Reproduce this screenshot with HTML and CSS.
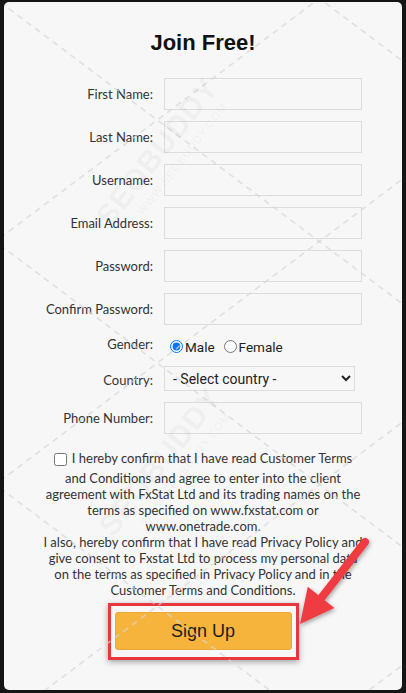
FILE: index.html
```html
<!DOCTYPE html>
<html lang="en">
<head>
<meta charset="utf-8">
<title>Join Free!</title>
<link rel="stylesheet" href="styles.css">
</head>
<body>
<div class="modal">
  <h1 class="title">Join Free!</h1>
  <form class="form">
    <div class="row"><label class="lbl">First Name:</label><input class="field" type="text"></div>
    <div class="row"><label class="lbl">Last Name:</label><input class="field" type="text"></div>
    <div class="row"><label class="lbl">Username:</label><input class="field" type="text"></div>
    <div class="row"><label class="lbl">Email Address:</label><input class="field" type="text"></div>
    <div class="row"><label class="lbl">Password:</label><input class="field" type="password"></div>
    <div class="row"><label class="lbl">Confirm Password:</label><input class="field" type="password"></div>
    <div class="row row-gender"><label class="lbl lbl-gender">Gender:</label>
      <div class="radios">
        <label class="radio"><input type="radio" name="g" checked>Male</label>
        <label class="radio"><input type="radio" name="g">Female</label>
      </div>
    </div>
    <div class="row row-country"><label class="lbl lbl-country">Country:</label>
      <select class="select"><option>- Select country -</option></select>
    </div>
    <div class="row"><label class="lbl">Phone Number:</label><input class="field" type="text"></div>
    <p class="terms"><input class="check" type="checkbox">I hereby confirm that I have read Customer Terms<br>and Conditions and agree to enter into the client<br>agreement with FxStat Ltd and its trading names on the<br>terms as specified on www.fxstat.com or<br>www.onetrade.com.<br>I also, hereby confirm that I have read Privacy Policy and<br>give consent to Fxstat Ltd to process my personal data<br>on the terms as specified in Privacy Policy and in the<br>Customer Terms and Conditions.</p>
    <div class="cta">
      <div class="highlight"><button class="btn" type="button">Sign Up</button></div>
    </div>
  </form>
</div>
<svg class="overlay" width="406" height="693" viewBox="0 0 406 693">
  <defs>
    <clipPath id="panel"><rect x="4" y="2" width="398" height="688" rx="5"/></clipPath>
    <filter id="sh" x="-30%" y="-30%" width="160%" height="160%">
      <feDropShadow dx="1" dy="2" stdDeviation="2" flood-color="#000" flood-opacity="0.35"/>
    </filter>
  </defs>
  <g clip-path="url(#panel)" class="wm">
    <g class="wm-lines">
      <line x1="0" y1="-484" x2="406" y2="-179.5"/>
      <line x1="0" y1="-241" x2="406" y2="63.5"/>
      <line x1="0" y1="2" x2="406" y2="306.5"/>
      <line x1="0" y1="245" x2="406" y2="549.5"/>
      <line x1="0" y1="488" x2="406" y2="792.5"/>
      <line x1="0" y1="731" x2="406" y2="1035.5"/>
      <line x1="0" y1="238" x2="406" y2="-66.5"/>
      <line x1="0" y1="481" x2="406" y2="176.5"/>
      <line x1="0" y1="724" x2="406" y2="419.5"/>
      <line x1="0" y1="967" x2="406" y2="662.5"/>
      <line x1="0" y1="1210" x2="406" y2="905.5"/>
    </g>
    <g transform="translate(165 158) rotate(-52)">
      <text class="wm-big" x="0" y="0" text-anchor="middle">SEOBUDDY</text>
      <text class="wm-small" x="10" y="18" text-anchor="middle">WWW.SEOBUDDY.COM</text>
    </g>
    <g transform="translate(168 468) rotate(-52)">
      <text class="wm-big" x="0" y="0" text-anchor="middle">SEOBUDDY</text>
      <text class="wm-small" x="10" y="18" text-anchor="middle">WWW.SEOBUDDY.COM</text>
    </g>
  </g>
  <g filter="url(#sh)" class="arrow">
    <line x1="365" y1="542" x2="322" y2="597" stroke-width="8" stroke-linecap="round"/>
    <polygon points="300,624 334.4,607.9 307.8,586.7"/>
  </g>
</svg>
</body>
</html>
```

FILE: styles.css
```css
* { box-sizing: border-box; }

html, body { margin: 0; padding: 0; }

body {
  width: 406px;
  height: 693px;
  background: #151515;
  position: relative;
  overflow: hidden;
  font-family: "Lato", "Liberation Sans", sans-serif;
}

.modal {
  margin: 2px 4px 0 4px;
  height: 688px;
  background: #f7f7f7;
  border-radius: 5px;
  padding-top: 28px;
}

.title {
  margin: 0;
  text-align: center;
  font-family: "Liberation Sans", Arial, sans-serif;
  font-weight: bold;
  font-size: 22px;
  line-height: 26px;
  color: #111;
}

.form {
  margin-top: 22px;
  display: flex;
  flex-direction: column;
  gap: 11px;
}

.row {
  display: grid;
  grid-template-columns: 149px 198px;
  column-gap: 11px;
  align-items: center;
}

.lbl {
  text-align: right;
  font-size: 13px;
  color: #333;
}

.lbl-gender { margin-top: -4px; }
.lbl-country { margin-top: 3px; }

.field {
  height: 32px;
  width: 198px;
  border: 1px solid #dcdcdc;
  background: transparent;
  margin: 0;
}

.row-gender { height: 19px; }

.radios {
  display: flex;
  align-items: center;
  gap: 3px;
  padding-top: 2px;
  font-family: "Roboto", "Liberation Sans", sans-serif;
  font-size: 13.5px;
  color: #222;
}

.radio {
  display: flex;
  align-items: center;
}

.radio input {
  margin: 0 2px 0 6px;
  width: 13px;
  height: 13px;
}

.select {
  width: 191px;
  height: 25px;
  border: 1px solid #dcdcdc;
  border-radius: 0;
  background: #f7f7f7;
  font-family: "Roboto", "Liberation Sans", sans-serif;
  font-size: 14px;
  color: #222;
  padding: 0 4px;
  margin: 0;
}

.terms {
  margin: 3px 0 0 0;
  text-align: center;
  font-size: 13px;
  line-height: 16px;
  color: #333;
}

.check {
  width: 13px;
  height: 13px;
  margin: 5px 5px 4px 0;
  vertical-align: -3px;
}

.cta {
  display: flex;
  justify-content: center;
  margin-top: -6px;
}

.highlight {
  border: 3px solid #e8373d;
  padding: 6px 4px 7px 4px;
  box-shadow: 0 2px 6px rgba(0, 0, 0, 0.35);
}

.btn {
  display: block;
  width: 177px;
  height: 38px;
  background: #f7b43c;
  border: 1px solid #eba737;
  border-radius: 3px;
  font-family: "Liberation Sans", Arial, sans-serif;
  font-size: 18px;
  color: #1c1c1c;
  padding: 0;
}

.overlay {
  position: absolute;
  left: 0;
  top: 0;
  pointer-events: none;
}

.wm-lines line {
  stroke: #d6d6d6;
  stroke-width: 1.6;
  stroke-dasharray: 6 5;
  opacity: 0.7;
}

.wm-big {
  font-family: "Liberation Sans", Arial, sans-serif;
  font-weight: bold;
  font-size: 30px;
  fill: rgba(0, 0, 0, 0.05);
  letter-spacing: 1px;
}

.wm-small {
  font-family: "Liberation Sans", Arial, sans-serif;
  font-size: 11px;
  fill: rgba(0, 0, 0, 0.05);
  letter-spacing: 1px;
}

.arrow line { stroke: #ef3b42; }
.arrow polygon { fill: #ef3b42; }
```
